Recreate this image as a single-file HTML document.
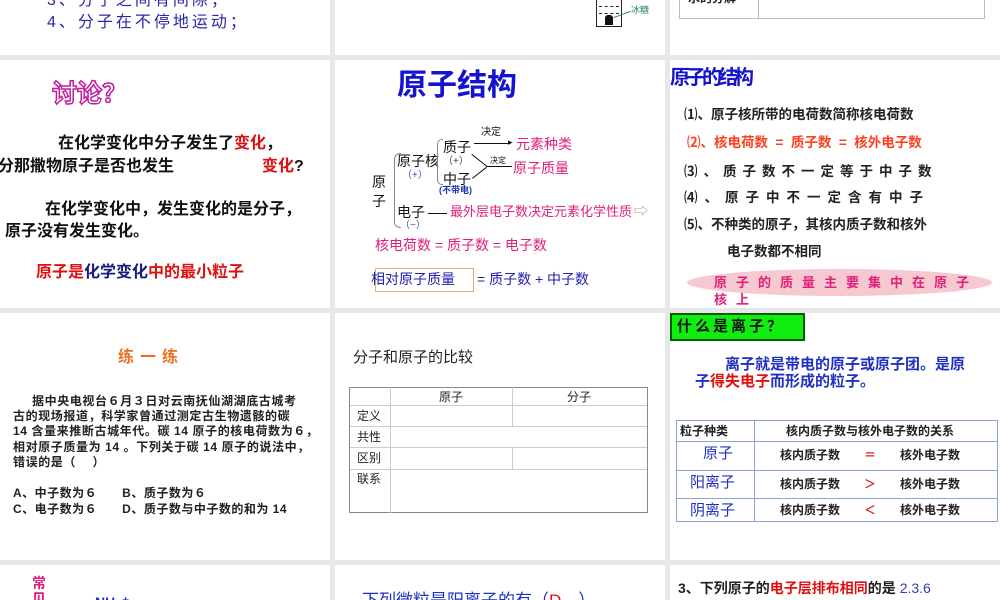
<!DOCTYPE html>
<html><head><meta charset="utf-8"><style>
*{margin:0;padding:0;box-sizing:border-box}
body{width:1000px;height:600px;overflow:hidden;background:#e8e8e8;position:relative;font-family:"Liberation Sans","Noto Sans CJK SC",sans-serif}
.s{position:absolute;background:#fff;overflow:hidden}
.t{position:absolute;white-space:nowrap;line-height:1}
.b{font-weight:bold}
</style></head><body>
<!-- row 1 -->
<div class="s" style="left:0;top:0;width:330px;height:55px">
 <div class="t" style="left:47px;top:-7px;font-size:16px;color:#2828a8;letter-spacing:3px">3、分子之间有间隙；</div>
 <div class="t" style="left:47px;top:15px;font-size:16px;color:#2828a8;letter-spacing:3px">4、分子在不停地运动；</div>
</div>
<div class="s" style="left:335px;top:0;width:330px;height:55px">
 <div style="position:absolute;left:261px;top:0;width:26px;height:27px;border:1px solid #222;border-top:none"></div>
 <div style="position:absolute;left:264px;top:6px;width:20px;border-top:1px dashed #222"></div>
 <div style="position:absolute;left:264px;top:13px;width:20px;border-top:1px dashed #222"></div>
 <div style="position:absolute;left:270px;top:15px;width:8px;height:10px;background:#111;border-radius:3px 3px 0 0"></div>
 <div style="position:absolute;left:278px;top:14px;width:18px;border-top:1px solid #2a8a5a;transform:rotate(-20deg)"></div>
 <div class="t" style="left:296px;top:6px;font-size:9px;color:#2a8a5a">冰糖</div>
</div>
<div class="s" style="left:670px;top:0;width:330px;height:55px">
 <div style="position:absolute;left:9px;top:-2px;width:306px;height:21px;border:1px solid #bbb"></div>
 <div style="position:absolute;left:88px;top:0;height:19px;border-left:1px solid #bbb"></div>
 <div class="t b" style="left:18px;top:-8px;font-size:12px;color:#222">水的分解</div>
</div>
<!-- row 2 -->
<div class="s" style="left:0;top:60px;width:330px;height:248px">
 <div class="t b" style="left:52px;top:22px;font-size:25px;color:#fff;-webkit-text-stroke:1.5px #c020a0">讨论？</div>
 <div class="t b" style="left:58px;top:76px;font-size:16px;color:#111">在化学变化中分子发生了<span style="color:#e01010">变化</span>，</div>
 <div class="t b" style="left:-2px;top:99px;font-size:16px;color:#111">分那撒物原子是否也发生</div>
 <div class="t b" style="left:262px;top:99px;font-size:16px;color:#e01010">变化<span style="color:#111">?</span></div>
 <div class="t b" style="left:45px;top:142px;font-size:16px;color:#111">在化学变化中，发生变化的是分子，</div>
 <div class="t b" style="left:5px;top:164px;font-size:16px;color:#111">原子没有发生变化。</div>
 <div class="t b" style="left:36px;top:205px;font-size:16px;color:#e01010">原子是<span style="color:#1a1a80">化学变化</span>中的最小粒子</div>
</div>
<div class="s" style="left:335px;top:60px;width:330px;height:248px">
 <div class="t b" style="left:62px;top:11px;font-size:30px;color:#1414d0">原子结构</div>
 <div class="t" style="left:37px;top:113px;font-size:14px;color:#111;line-height:19px;white-space:normal;width:15px">原子</div>
 <div style="position:absolute;left:59px;top:93px;width:7px;height:75px;border:1px solid #888;border-right:none;border-radius:6px 0 0 6px"></div>
 <div class="t" style="left:62px;top:94px;font-size:14px;color:#111">原子核</div>
 <div class="t" style="left:67px;top:111px;font-size:10px;color:#4050c0">（+）</div>
 <div style="position:absolute;left:102px;top:79px;width:6px;height:46px;border:1px solid #888;border-right:none;border-radius:5px 0 0 5px"></div>
 <div class="t" style="left:108px;top:80px;font-size:14px;color:#111">质子</div>
 <div class="t" style="left:108px;top:97px;font-size:10px;color:#444">（+）</div>
 <div class="t" style="left:108px;top:112px;font-size:14px;color:#111">中子</div>
 <div class="t b" style="left:104px;top:126px;font-size:9px;color:#2030b0">(不带电)</div>
 <div class="t" style="left:146px;top:68px;font-size:10px;color:#111">决定</div>
 <div style="position:absolute;left:139px;top:83px;width:36px;border-top:1px solid #111"></div>
 <div class="t" style="left:173px;top:78px;font-size:9px;color:#111">▸</div>
 <div class="t" style="left:181px;top:77px;font-size:14px;color:#e0207a">元素种类</div>
 <div style="position:absolute;left:137px;top:94px;width:19px;border-top:1px solid #111;transform:rotate(38deg);transform-origin:0 0"></div>
 <div style="position:absolute;left:137px;top:118px;width:18px;border-top:1px solid #111;transform:rotate(-38deg);transform-origin:0 0"></div>
 <div style="position:absolute;left:151px;top:106px;width:26px;border-top:1px solid #111"></div>
 <div class="t" style="left:155px;top:97px;font-size:8px;color:#111">决定</div>
 <div class="t" style="left:178px;top:101px;font-size:14px;color:#e0207a">原子质量</div>
 <div class="t" style="left:62px;top:145px;font-size:14px;color:#111">电子</div>
 <div class="t" style="left:65px;top:161px;font-size:10px;color:#4050c0">（−）</div>
 <div style="position:absolute;left:93px;top:153px;width:19px;border-top:1px solid #111"></div>
 <div class="t" style="left:115px;top:145px;font-size:13px;color:#e0207a">最外层电子数决定元素化学性质</div>
 <div class="t" style="left:299px;top:144px;font-size:14px;color:#b09090">⇨</div>
 <div class="t" style="left:40px;top:178px;font-size:14px;color:#e0207a">核电荷数 = 质子数 = 电子数</div>
 <div style="position:absolute;left:40px;top:208px;width:99px;height:24px;border:1px solid #e0b070"></div>
 <div class="t" style="left:36px;top:212px;font-size:14px;color:#2020b0">相对原子质量</div>
 <div class="t" style="left:142px;top:212px;font-size:14px;color:#2020b0">= 质子数 + 中子数</div>
</div>
<div class="s" style="left:670px;top:60px;width:330px;height:248px">
 <div class="t b" style="left:0;top:8px;font-size:20px;color:#1414d0;letter-spacing:-4px">原子的结构</div>
 <div class="t b" style="left:14px;top:48px;font-size:13.5px;color:#222">⑴、原子核所带的电荷数简称核电荷数</div>
 <div class="t b" style="left:17px;top:76px;font-size:13.5px;color:#ff4020">⑵、核电荷数 &nbsp;= &nbsp;质子数 &nbsp;= &nbsp;核外电子数</div>
 <div class="t b" style="left:14px;top:105px;font-size:13.5px;color:#222;letter-spacing:6px">⑶、质子数不一定等于中子数</div>
 <div class="t b" style="left:14px;top:131px;font-size:13.5px;color:#222;letter-spacing:7px">⑷、原子中不一定含有中子</div>
 <div class="t b" style="left:14px;top:158px;font-size:13.5px;color:#222">⑸、不种类的原子，其核内质子数和核外</div>
 <div class="t b" style="left:57px;top:185px;font-size:13.5px;color:#222">电子数都不相同</div>
 <div style="position:absolute;left:17px;top:209px;width:305px;height:27px;border-radius:50%;background:#f6c8d0"></div>
 <div class="t b" style="left:44px;top:216px;font-size:13px;color:#e0207a;letter-spacing:9px">原子的质量主要集中在原子</div>
 <div class="t b" style="left:44px;top:233px;font-size:13px;color:#e0207a;letter-spacing:9px">核上</div>
</div>
<!-- row 3 -->
<div class="s" style="left:0;top:313px;width:330px;height:247px">
 <div class="t b" style="left:118px;top:37px;font-size:16px;color:#f07020;letter-spacing:6px">练一练</div>
 <div class="t b" style="left:32px;top:81px;font-size:12px;color:#222;line-height:15.3px;white-space:pre;letter-spacing:0.6px">据中央电视台６月３日对云南抚仙湖湖底古城考</div>
 <div class="t b" style="left:13px;top:96px;font-size:12px;color:#222;line-height:15.3px;white-space:pre;letter-spacing:0.6px">古的现场报道，科学家曾通过测定古生物遗骸的碳
14 含量来推断古城年代。碳 14 原子的核电荷数为６，
相对原子质量为 14 。下列关于碳 14 原子的说法中，
错误的是（　 ）</div>
 <div class="t b" style="left:13px;top:173px;font-size:12px;color:#222;line-height:15.5px;white-space:pre;letter-spacing:0.5px">A、中子数为６　　B、质子数为６
C、电子数为６　　D、质子数与中子数的和为 14</div>
</div>
<div class="s" style="left:335px;top:313px;width:330px;height:247px">
 <div class="t" style="left:18px;top:37px;font-size:15px;color:#222">分子和原子的比较</div>
 <div style="position:absolute;left:14px;top:74px;width:299px;height:126px;border:1px solid #888"></div>
 <div style="position:absolute;left:55px;top:74px;height:126px;border-left:1px solid #ccc"></div>
 <div style="position:absolute;left:15px;top:92px;width:297px;border-top:1px solid #ccc"></div>
 <div style="position:absolute;left:15px;top:113px;width:297px;border-top:1px solid #ccc"></div>
 <div style="position:absolute;left:15px;top:134px;width:297px;border-top:1px solid #ccc"></div>
 <div style="position:absolute;left:15px;top:156px;width:297px;border-top:1px solid #ccc"></div>
 <div style="position:absolute;left:177px;top:74px;height:39px;border-left:1px solid #ccc"></div>
 <div style="position:absolute;left:177px;top:134px;height:22px;border-left:1px solid #ccc"></div>
 <div class="t" style="left:104px;top:78px;font-size:12px;color:#222">原子</div>
 <div class="t" style="left:232px;top:78px;font-size:12px;color:#222">分子</div>
 <div class="t" style="left:22px;top:97px;font-size:12px;color:#222">定义</div>
 <div class="t" style="left:22px;top:118px;font-size:12px;color:#222">共性</div>
 <div class="t" style="left:22px;top:139px;font-size:12px;color:#222">区别</div>
 <div class="t" style="left:22px;top:160px;font-size:12px;color:#222">联系</div>
</div>
<div class="s" style="left:670px;top:313px;width:330px;height:247px">
 <div style="position:absolute;left:0;top:0;width:135px;height:28px;background:#10ee10;border:2px solid #0a5a0a"></div>
 <div class="t b" style="left:7px;top:6px;font-size:15px;color:#111;letter-spacing:3px">什么是离子？</div>
 <div class="t b" style="left:55px;top:44px;font-size:15px;color:#2030c0">离子就是带电的原子或原子团。是原</div>
 <div class="t b" style="left:25px;top:61px;font-size:15px;color:#2030c0">子<span style="color:#e01010">得失电子</span>而形成的粒子。</div>
 <div style="position:absolute;left:6px;top:107px;width:322px;height:102px;border:1px solid #8aa4d8"></div>
 <div style="position:absolute;left:84px;top:107px;height:102px;border-left:1px solid #8aa4d8"></div>
 <div style="position:absolute;left:6px;top:128px;width:322px;border-top:1px solid #8aa4d8"></div>
 <div style="position:absolute;left:6px;top:157px;width:322px;border-top:1px solid #8aa4d8"></div>
 <div style="position:absolute;left:6px;top:185px;width:322px;border-top:1px solid #8aa4d8"></div>
 <div class="t b" style="left:10px;top:112px;font-size:12px;color:#222">粒子种类</div>
 <div class="t b" style="left:116px;top:112px;font-size:12px;color:#222">核内质子数与核外电子数的关系</div>
 <div class="t" style="left:33px;top:133px;font-size:15px;color:#2030c0">原子</div>
 <div class="t" style="left:20px;top:162px;font-size:15px;color:#2030c0">阳离子</div>
 <div class="t" style="left:20px;top:190px;font-size:15px;color:#2030c0">阴离子</div>
 <div class="t b" style="left:110px;top:136px;font-size:12px;color:#222">核内质子数　　<span style="color:#e02020">＝</span>　　核外电子数</div>
 <div class="t b" style="left:110px;top:165px;font-size:12px;color:#222">核内质子数　　<span style="color:#e02020">＞</span>　　核外电子数</div>
 <div class="t b" style="left:110px;top:191px;font-size:12px;color:#222">核内质子数　　<span style="color:#e02020">＜</span>　　核外电子数</div>
</div>
<!-- row 4 -->
<div class="s" style="left:0;top:565px;width:330px;height:35px">
 <div class="t b" style="left:32px;top:10px;font-size:14px;color:#e0207a;line-height:16px;white-space:normal;width:15px">常见</div>
 <div class="t b" style="left:95px;top:30px;font-size:14px;color:#2030c0">NH₄⁺</div>
</div>
<div class="s" style="left:335px;top:565px;width:330px;height:35px">
 <div class="t" style="left:27px;top:27px;font-size:17px;color:#2030c0">下列微粒是阳离子的有（<span style="color:#e01010">D</span>　）</div>
</div>
<div class="s" style="left:670px;top:565px;width:330px;height:35px">
 <div class="t b" style="left:8px;top:16px;font-size:14px;color:#222">3、下列原子的<span style="color:#e01010">电子层排布相同</span>的是 <span style="color:#3040b0;font-weight:normal">2.3.6</span></div>
</div>
</body></html>
